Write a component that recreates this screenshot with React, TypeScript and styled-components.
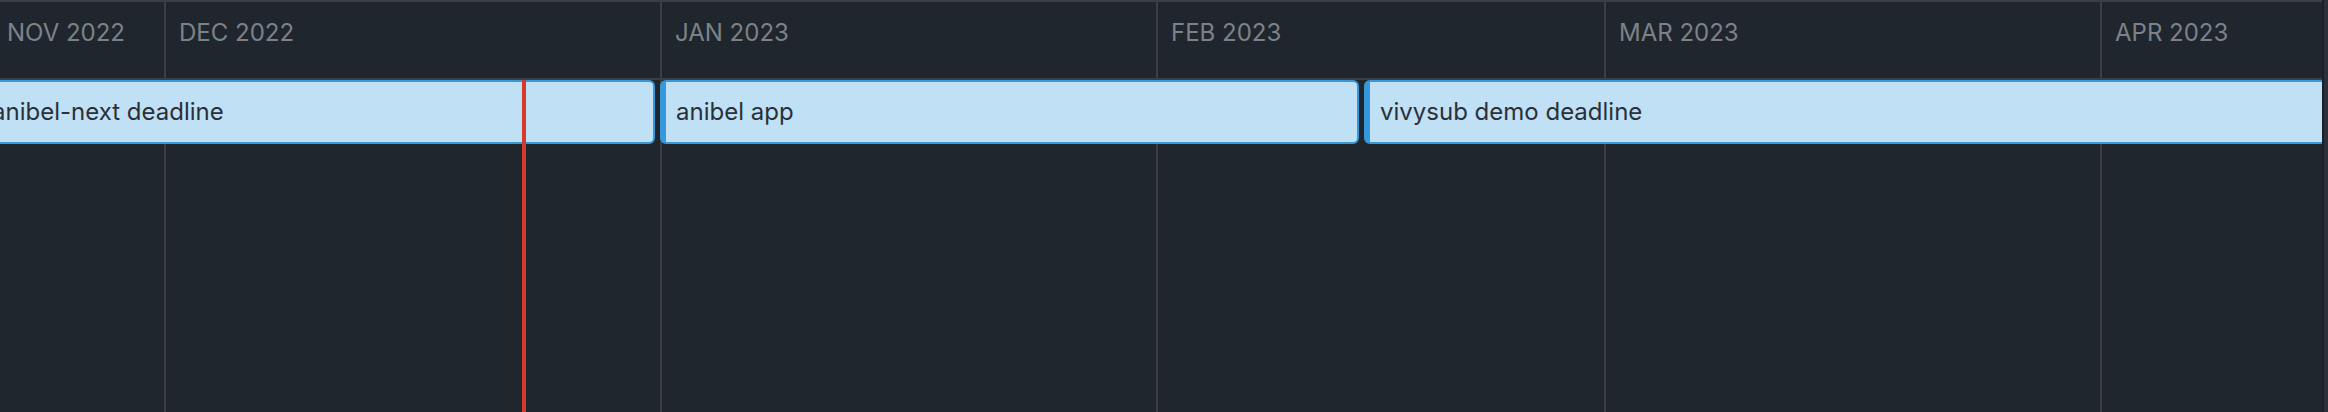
import React from "react";
import styled, { createGlobalStyle } from "styled-components";

const DAY = 16;
const SCROLL = 316;

const GRID = "#3a3f47";

const months = [
  { label: "NOV 2022", days: 30 },
  { label: "DEC 2022", days: 31 },
  { label: "JAN 2023", days: 31 },
  { label: "FEB 2023", days: 28 },
  { label: "MAR 2023", days: 31 },
  { label: "APR 2023", days: 30 },
];

const bars = [
  { label: "anibel-next deadline", start: 18.25, end: 61 },
  { label: "anibel app", start: 61, end: 105 },
  { label: "vivysub demo deadline", start: 105, end: 170 },
];

const TODAY = 52.375;

const GlobalStyle = createGlobalStyle`
  html, body {
    margin: 0;
    padding: 0;
    background: #20262e;
  }
  body {
    font-family: Inter, "Noto Sans", "Liberation Sans", sans-serif;
  }
`;

const Frame = styled.div`
  display: flex;
  width: 2328px;
  height: 412px;
  overflow: hidden;
  background: #20262e;
`;

const Viewport = styled.div`
  flex: 1;
  min-width: 0;
  overflow: hidden;
  display: flex;
  flex-direction: column;
  border-top: 2px solid ${GRID};
`;

const Scrollbar = styled.div`
  width: 4px;
  border-left: 2px solid #1b2027;
  background: #2b313a;
`;

const Canvas = styled.div`
  flex: 1;
  display: flex;
  flex-direction: column;
  width: max-content;
`;

const HeaderRow = styled.div`
  display: flex;
  height: 76px;
  border-bottom: 2px solid ${GRID};
`;

const MonthHead = styled.div<{ $w: number }>`
  box-sizing: border-box;
  width: ${(p) => p.$w}px;
  flex: none;
  border-left: 2px solid ${GRID};
  padding: 17px 0 0 13px;
`;

const MonthLabel = styled.span`
  display: inline-block;
  font-size: 24px;
  line-height: 28px;
  font-weight: 400;
  color: #7d8288;
  white-space: nowrap;
`;

const Body = styled.div`
  position: relative;
  flex: 1;
  display: flex;
`;

const MonthColumn = styled.div<{ $w: number }>`
  box-sizing: border-box;
  width: ${(p) => p.$w}px;
  flex: none;
  border-left: 2px solid ${GRID};
`;

const Bar = styled.div`
  position: absolute;
  top: 0;
  height: 64px;
  box-sizing: border-box;
  background: #c0e0f5;
  border: 2px solid #3498db;
  border-left-width: 6px;
  border-radius: 6px;
  padding-left: 10px;
  font-size: 24px;
  line-height: 60px;
  color: #2b3038;
  white-space: nowrap;
  overflow: hidden;
`;

const TodayLine = styled.div`
  position: absolute;
  top: 0;
  bottom: 0;
  width: 4px;
  background: #d53a2c;
`;

export default function App() {
  let acc = 0;
  const starts = months.map((m) => {
    const s = acc;
    acc += m.days * DAY;
    return s;
  });

  return (
    <>
      <GlobalStyle />
      <Frame>
        <Viewport>
          <Canvas style={{ marginLeft: -SCROLL }}>
            <HeaderRow>
              {months.map((m, i) => {
                const natural = starts[i] + 15;
                const pinned = Math.max(natural, SCROLL + 7);
                const end = starts[i] + m.days * DAY;
                const shift = pinned < end - 140 ? pinned - natural : 0;
                return (
                  <MonthHead key={m.label} $w={m.days * DAY}>
                    <MonthLabel style={{ marginLeft: shift }}>{m.label}</MonthLabel>
                  </MonthHead>
                );
              })}
            </HeaderRow>
            <Body>
              {months.map((m) => (
                <MonthColumn key={m.label} $w={m.days * DAY} />
              ))}
              {bars.map((b) => (
                <Bar
                  key={b.label}
                  style={{ left: b.start * DAY, width: (b.end - b.start) * DAY - 5 }}
                >
                  {b.label}
                </Bar>
              ))}
              <TodayLine style={{ left: TODAY * DAY }} />
            </Body>
          </Canvas>
        </Viewport>
        <Scrollbar />
      </Frame>
    </>
  );
}
